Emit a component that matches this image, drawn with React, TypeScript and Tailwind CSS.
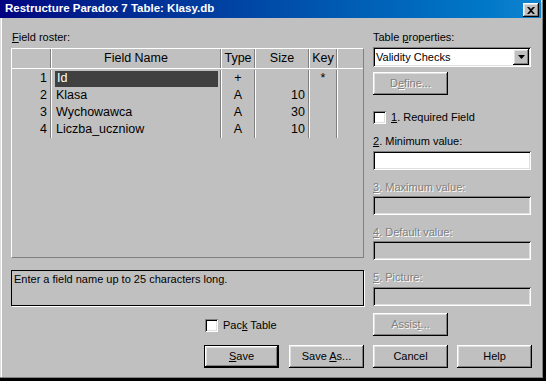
import React from "react";

// Win98-style bevels
const raised =
  "shadow-[inset_-1px_-1px_#000,inset_1px_1px_#fff,inset_-2px_-2px_#808080,inset_2px_2px_#dfdfdf]";
const sunken =
  "shadow-[inset_1px_1px_#808080,inset_-1px_-1px_#fff,inset_2px_2px_#000,inset_-2px_-2px_#dfdfdf]";
const dim = "text-[#808080] [text-shadow:1px_1px_0_#fff]";

const fields = [
  { n: 1, name: "Id", type: "+", size: "", key: "*" },
  { n: 2, name: "Klasa", type: "A", size: "10", key: "" },
  { n: 3, name: "Wychowawca", type: "A", size: "30", key: "" },
  { n: 4, name: "Liczba_uczniow", type: "A", size: "10", key: "" },
];

function Sep() {
  return (
    <>
      <div className="w-px bg-[#808080]" />
      <div className="w-px bg-white" />
    </>
  );
}

function Button({
  children,
  disabled,
  isDefault,
}: {
  children: React.ReactNode;
  disabled?: boolean;
  isDefault?: boolean;
}) {
  return (
    <div
      className={
        "flex h-[23px] w-[75px] items-center justify-center bg-[#c0c0c0] " +
        (isDefault ? "border border-black " : "") +
        (disabled ? dim : "")
      }
    >
      <div className={"flex h-full w-full items-center justify-center " + raised}>
        <span>{children}</span>
      </div>
    </div>
  );
}

function Check({ label }: { label: React.ReactNode }) {
  return (
    <div className="flex h-[13px] items-center">
      <div className={"h-[13px] w-[13px] bg-white " + sunken} />
      <span className="ml-[5px] leading-[13px]">{label}</span>
    </div>
  );
}

function Field({ label, disabled }: { label: React.ReactNode; disabled?: boolean }) {
  return <div className={"h-[13px] leading-[13px] " + (disabled ? dim : "")}>{label}</div>;
}

function Input({ disabled, className = "" }: { disabled?: boolean; className?: string }) {
  return (
    <div
      className={
        "h-[19px] w-[158px] " + (disabled ? "bg-[#c0c0c0] " : "bg-white ") + sunken + " " + className
      }
    />
  );
}

function Grid() {
  return (
    <div className="flex h-[210px] w-[353px] flex-col border-t border-l border-r border-b border-t-white border-l-white border-r-[#808080] border-b-[#808080] text-[12.5px]">
      <div className="flex h-[20px] border-b border-white leading-[19px]">
        <div className="w-[38px]" />
        <Sep />
        <div className="w-[168px] text-center">Field Name</div>
        <Sep />
        <div className="w-[32px] text-center">Type</div>
        <Sep />
        <div className="w-[52px] text-center">Size</div>
        <Sep />
        <div className="w-[26px] text-center">Key</div>
        <Sep />
        <div className="flex-1" />
      </div>
      <div className="flex flex-col pt-px">
        {fields.map((f) => (
          <div key={f.n} className="flex h-[17px] leading-[17px]">
            <div className="w-[38px] pr-[3px] text-right">{f.n}</div>
            <Sep />
            <div className="w-[168px]">
              {f.n === 1 ? (
                <div className="ml-[3px] mt-px h-[16px] w-[163px] bg-[#404040] pl-[2px] leading-[15px] text-white">
                  {f.name}
                </div>
              ) : (
                <div className="pl-[4px]">{f.name}</div>
              )}
            </div>
            <Sep />
            <div className="w-[32px] text-center">{f.type}</div>
            <Sep />
            <div className="w-[52px] pr-[3px] text-right">{f.size}</div>
            <Sep />
            <div className="w-[26px] text-center">{f.key}</div>
            <Sep />
          </div>
        ))}
      </div>
    </div>
  );
}

export default function App() {
  return (
    <div className="flex h-[381px] w-[546px] flex-col overflow-hidden bg-[#c0c0c0] font-['Liberation_Sans',Arial,sans-serif] text-[11px] text-black shadow-[inset_-3px_-3px_#000,inset_-4px_-4px_#808080,inset_1px_1px_#dfdfdf,inset_2px_2px_#fff]">
      {/* title bar */}
      <div className="mr-[5px] flex h-[18px] shrink-0 items-center bg-gradient-to-r from-[#000080] to-[#1084d0] pl-[5px] pr-[2px]">
        <span className="flex-1 text-[11.5px] font-bold text-white">
          Restructure Paradox 7 Table: Klasy.db
        </span>
        <div className={"mt-[2px] flex h-[14px] w-[16px] items-center justify-center bg-[#c0c0c0] " + raised}>
          <svg width="8" height="7" viewBox="0 0 8 7">
            <path d="M0 0h2l2 2 2-2h2L5 3.5 8 7H6L4 5 2 7H0l3-3.5z" fill="#000" />
          </svg>
        </div>
      </div>

      <div className="flex pl-[11px]">
        {/* left column */}
        <div className="flex w-[353px] flex-col">
          <div className="mt-[13px] h-[13px] pl-px leading-[13px]">
            <u>F</u>ield roster:
          </div>
          <div className="mt-[4px]">
            <Grid />
          </div>
          <div className="mt-[12px] h-[36px] w-[353px] border border-black pl-[2px] pt-[2px] leading-[13px] shadow-[1px_1px_0_#fff]">
            Enter a field name up to 25 characters long.
          </div>
          <div className="ml-[194px] mt-[13px]">
            <Check
              label={
                <>
                  Pac<u>k</u> Table
                </>
              }
            />
          </div>
          <div className="ml-[193px] mt-[13px] flex gap-[10px]">
            <Button isDefault>
              <u>S</u>ave
            </Button>
            <Button>
              Save <u>A</u>s...
            </Button>
          </div>
        </div>

        {/* right column */}
        <div className="ml-[9px] flex w-[159px] flex-col">
          <div className="mt-[13px] h-[13px] leading-[13px]">
            Table <u>p</u>roperties:
          </div>
          <div className={"mt-[3px] flex h-[20px] w-[158px] items-center bg-white p-[2px] " + sunken}>
            <span className="flex-1 pl-px">Validity Checks</span>
            <div className={"flex h-[16px] w-[16px] items-center justify-center bg-[#c0c0c0] " + raised}>
              <svg width="7" height="4" viewBox="0 0 7 4">
                <path d="M0 0h7L3.5 4z" fill="#000" />
              </svg>
            </div>
          </div>
          <div className="mt-[5px]">
            <Button disabled>
              D<u>e</u>fine...
            </Button>
          </div>
          <div className="mt-[16px]">
            <Check
              label={
                <>
                  <u>1</u>. Required Field
                </>
              }
            />
          </div>
          <div className="mt-[11px]">
            <Field label={<><u>2</u>. Minimum value:</>} />
          </div>
          <Input className="mt-[3px]" />
          <div className="mt-[11px]">
            <Field disabled label={<><u>3</u>. Maximum value:</>} />
          </div>
          <Input disabled className="mt-[2px]" />
          <div className="mt-[11px]">
            <Field disabled label={<><u>4</u>. Default value:</>} />
          </div>
          <Input disabled className="mt-[2px]" />
          <div className="mt-[11px]">
            <Field disabled label={<><u>5</u>. Picture:</>} />
          </div>
          <Input disabled className="mt-[3px]" />
          <div className="mt-[7px]">
            <Button disabled>
              Assis<u>t</u>...
            </Button>
          </div>
          <div className="mt-[9px] flex gap-[9px]">
            <Button>Cancel</Button>
            <Button>Help</Button>
          </div>
        </div>
      </div>
    </div>
  );
}
